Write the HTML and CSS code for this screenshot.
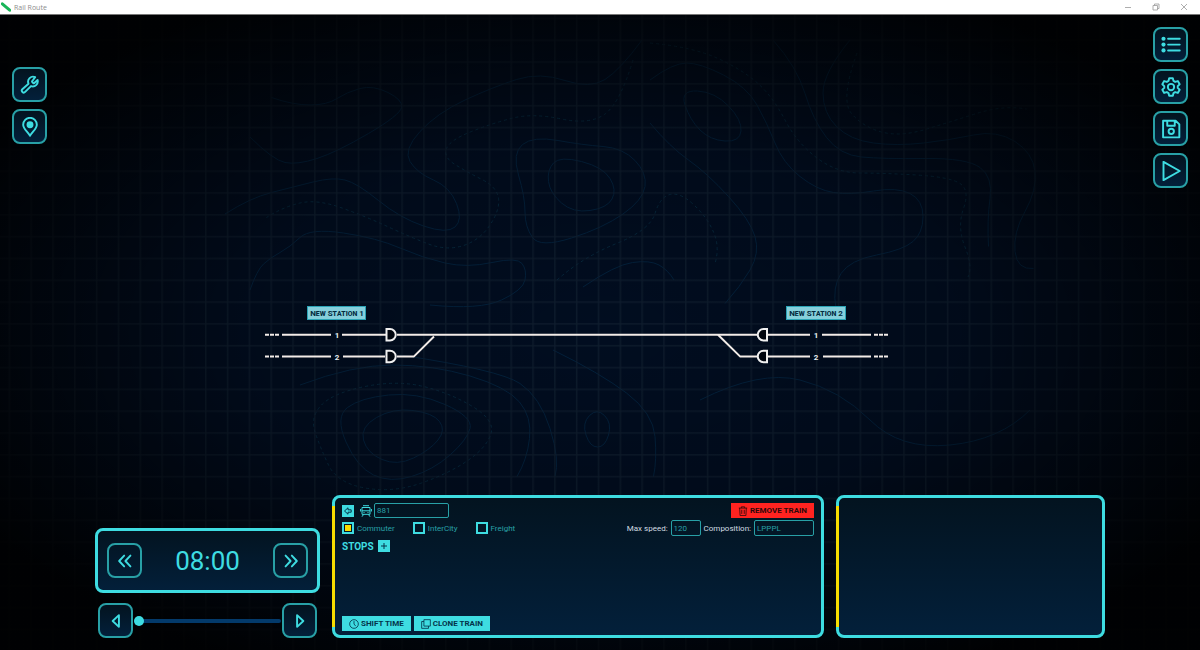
FILE: index.html
```html
<!DOCTYPE html>
<html lang="en">
	<head>
		<meta charset="UTF-8" />
		<meta name="viewport" content="width=device-width, initial-scale=1.0" />
		<title>Rail Route</title>
		<link rel="stylesheet" href="styles.css">
	</head>
	<body>
		<header class="titlebar">
			<svg class="titlebar-logo" viewBox="0 0 10 10" aria-hidden="true">
				<path d="M1.3 1.8 8.7 8.2" stroke="#19b558" stroke-width="3" stroke-linecap="round" />
			</svg>
			<span class="titlebar-name">Rail Route</span>
			<div class="window-controls">
				<button type="button" class="window-button" aria-label="Minimize">
					<svg viewBox="0 0 8 8"><path d="M1 4.5h6" /></svg>
				</button>
				<button type="button" class="window-button" aria-label="Restore">
					<svg viewBox="0 0 8 8"><path d="M1 2.5h4.5V7H1zM2.5 2.5V1H7v4.5H5.5" /></svg>
				</button>
				<button type="button" class="window-button" aria-label="Close">
					<svg viewBox="0 0 8 8"><path d="M1 1l6 6M7 1 1 7" /></svg>
				</button>
			</div>
		</header>

		<main class="game">
			<svg class="map" viewBox="0 15 1200 635" preserveAspectRatio="xMidYMid slice">
				<defs>
					<pattern id="grid" x="8.6" y="17.6" width="21.82" height="21.82" patternUnits="userSpaceOnUse">
						<path d="M0 .8h21.82M.8 0v21.82" class="grid-line" />
					</pattern>
					<radialGradient id="fade" cx=".5" cy=".5" r=".6">
						<stop offset="0" stop-color="#000" stop-opacity="0" />
						<stop offset=".5" stop-color="#000" stop-opacity=".2" />
						<stop offset="1" stop-color="#000" stop-opacity=".92" />
					</radialGradient>
				</defs>
				<rect y="15" width="1200" height="635" fill="#010d20" />
				<g id="contours"></g>
				<rect y="15" width="1200" height="635" fill="url(#grid)" />
				<rect y="15" width="1200" height="635" fill="url(#fade)" />

				<!-- tracks -->
				<g class="track">
					<path d="M282 334.7h49M342 334.7h44M397 334.7h360M768 334.7h42M822 334.7h49" />
					<path d="M282 356.4h49M343 356.4h42M397 356.4h17L434 336.5" />
					<path d="M718 334.7 740 356.4h17M768 356.4h42M823 356.4h48" />
				</g>
				<g class="track-end">
					<path d="M265 334.7h14M265 356.4h14M874 334.7h14M874 356.4h14" />
				</g>
				<g class="signal">
					<path d="M386.5 329v11.5h3.5a5.7 5.7 0 0 0 0-11.5z" />
					<path d="M386.5 350.7v11.5h3.5a5.7 5.7 0 0 0 0-11.5z" />
					<path d="M767 329v11.5h-3.5a5.7 5.7 0 0 1 0-11.5z" />
					<path d="M767 350.7v11.5h-3.5a5.7 5.7 0 0 1 0-11.5z" />
				</g>
				<g class="platform">
					<text x="337" y="338">1</text>
					<text x="337" y="360">2</text>
					<text x="816" y="338">1</text>
					<text x="816" y="360">2</text>
				</g>

				<!-- stations -->
				<g class="station">
					<rect x="307.5" y="306.5" width="58" height="13" />
					<text x="337" y="316">New Station 1</text>
					<rect x="786.5" y="306.5" width="59" height="13" />
					<text x="816" y="316">New Station 2</text>
				</g>
			</svg>

			<div class="hud">
				<div class="hud-top">
					<nav class="tools tools-left" aria-label="Editor">
						<button type="button" class="tile" aria-label="Build">
							<svg viewBox="0 0 24 24"><path d="M14.8 7.2a1 1 0 0 0 0 1.4l1 1a1 1 0 0 0 1.4 0l3.9-3.6a6 6 0 0 1-7.9 7.3l-7 7a2.2 2.2 0 0 1-3.4-3.2l7.4-6.7a6 6 0 0 1 8-7.8z" /></svg>
						</button>
						<button type="button" class="tile" aria-label="Station">
							<svg viewBox="0 0 24 24"><path d="M12 22.5C9 17.5 3.8 14 3.8 9.2a8.2 8.2 0 0 1 16.4 0C20.2 14 15 17.5 12 22.5z" /><circle cx="12" cy="9.3" r="3" fill="currentColor" /></svg>
						</button>
					</nav>
					<nav class="tools" aria-label="Game">
						<button type="button" class="tile" aria-label="Timetable">
							<svg viewBox="0 0 24 24"><path d="M8.5 4.5h14M8.500 11.500h14M8.500 18.500h14" /><g fill="currentColor" stroke="none"><circle cx="3" cy="4.500" r="2.500" /><circle cx="3" cy="11.500" r="2.500" /><circle cx="3" cy="18.500" r="2.500" /></g></svg>
						</button>
						<button type="button" class="tile" aria-label="Settings">
							<svg viewBox="0 0 24 24"><path d="M9.8 1.5h4.4l.8 3.2 2 1.2 3.2-1 2.2 3.8-2.3 2.2v2.2l2.3 2.2-2.2 3.8-3.2-1-2 1.2-.8 3.2H9.8L9 19.3l-2-1.2-3.2 1-2.2-3.8 2.3-2.2v-2.2L1.6 8.700l2.200-3.800 3.200 1 2-1.200z" /><circle cx="12" cy="12" r="3.800" /></svg>
						</button>
						<button type="button" class="tile" aria-label="Save">
							<svg viewBox="0 0 24 24"><path d="M2.500 2h15l4.500 4.500V22H2.500zM7.500 2v6h9V2" /><circle cx="12.300" cy="14.800" r="3.200" /></svg>
						</button>
						<button type="button" class="tile" aria-label="Play">
							<svg viewBox="0 0 24 24"><path d="M3 1 22.500 12 3 23z" /></svg>
						</button>
					</nav>
				</div>

				<div class="hud-bottom">
					<section class="time" aria-label="Time">
						<div class="panel clock">
							<button type="button" class="tile tile-flat" aria-label="Earlier">
								<svg viewBox="0 0 24 24"><path d="M11 5.500 5 12l6 6.500M18.500 5.500l-6 6.500 6 6.500" /></svg>
							</button>
							<time class="clock-value">08:00</time>
							<button type="button" class="tile tile-flat" aria-label="Later">
								<svg viewBox="0 0 24 24"><path d="m5.500 5.500 6 6.500-6 6.500M13 5.500l6 6.500-6 6.500" /></svg>
							</button>
						</div>
						<div class="scrub">
							<button type="button" class="tile" aria-label="Step back">
								<svg viewBox="0 0 24 24"><path d="M15.500 5v14L8 12z" /></svg>
							</button>
							<input type="range" class="scrub-range" min="0" max="100" value="0" aria-label="Time of day" />
							<button type="button" class="tile" aria-label="Step forward">
								<svg viewBox="0 0 24 24"><path d="M8.500 5v14l7.500-7z" /></svg>
							</button>
						</div>
					</section>

					<form class="panel panel-marked train">
						<div class="row row-head">
							<button type="button" class="square" aria-label="Back">
								<svg viewBox="0 0 12 12"><path d="M2.500 6 6 2.800v2h3.200v2.400H6v2z" /></svg>
							</button>
							<label class="train-number">
								<svg class="train-icon" viewBox="0 0 12 12" role="img" aria-label="Train number"><path d="M3 .7h6M2 2.500h8v6.800H2zM2 5.800h8M3.500 9.500 2 11.700M8.500 9.500l1.500 2.200M.6 4v2.500M11.400 4v2.500" /><path d="M3.500 7.500h1M7.500 7.500h1" /></svg>
								<input type="text" class="field field-number" value="881" />
							</label>
							<button type="button" class="action action-danger">
								<svg viewBox="0 0 12 12"><path d="M1 2.500h10M4 2.500V1h4v1.500M2 2.500l.5 9h7l.5-9M4.500 4.500v5M7.500 4.500v5" /></svg>
								REMOVE TRAIN
							</button>
						</div>
						<div class="row row-type">
							<label class="check"><input type="checkbox" checked />Commuter</label>
							<label class="check"><input type="checkbox" />InterCity</label>
							<label class="check"><input type="checkbox" />Freight</label>
							<div class="specs">
								<label for="max-speed">Max speed:</label>
								<input type="text" id="max-speed" class="field field-speed" value="120" />
								<label for="composition">Composition:</label>
								<input type="text" id="composition" class="field field-composition" value="LPPPL" />
							</div>
						</div>
						<div class="row row-stops">
							<h2 class="heading">STOPS</h2>
							<button type="button" class="square" aria-label="Add stop">
								<svg viewBox="0 0 12 12"><path d="M6 3v6M3 6h6" /></svg>
							</button>
						</div>
						<div class="row row-actions">
							<button type="button" class="action">
								<svg viewBox="0 0 12 12"><circle cx="6" cy="6" r="5.200" /><path d="M6 2.500V6l2 2.500" /></svg>
								SHIFT TIME
							</button>
							<button type="button" class="action">
								<svg viewBox="0 0 12 12"><path d="M3.500.8h7.700v7.700H3.500zM3.500 3H.8v8.200H9V8.500" /></svg>
								CLONE TRAIN
							</button>
						</div>
					</form>

					<section class="panel panel-marked details" aria-label="Details"></section>
				</div>
			</div>
		</main>

		<script src="contours.js"></script>
	</body>
</html>
```
FILE: styles.css
```css
:root {
	--cyan: #3edce1;
	--cyan-dim: #28a0a6;
	--yellow: #f7dc00;
	--red: #ff2320;
	--ink: #04344a;
	--panel-bg: linear-gradient(#03131f, #03203b);
}
* {
	box-sizing: border-box;
}
body {
	display: flex;
	flex-direction: column;
	min-height: 100vh;
	margin: 0;
	background-color: #000;
	color: var(--cyan);
	font-family: Roboto, sans-serif;
	font-size: 8px;
}
button,
input {
	margin: 0;
	font: inherit;
	color: inherit;
}
button {
	padding: 0;
	border: none;
	background: none;
	cursor: pointer;
}
svg {
	fill: none;
}

/* window title */
.titlebar {
	display: flex;
	align-items: center;
	height: 15px;
	padding: 0 12px 0 1px;
	border-bottom: 1px solid #777;
	background-color: #fff;
	color: #8c8c8c;
}
.titlebar-logo {
	width: 10px;
	height: 10px;
	margin-right: 3px;
}
.titlebar-name {
	font-family: "Open Sans", sans-serif;
	font-size: 7px;
}
.window-controls {
	display: flex;
	gap: 20px;
	margin-left: auto;
}
.window-button {
	display: flex;
}
.window-button svg {
	width: 8px;
	height: 8px;
	stroke: #999;
	stroke-width: 0.8;
}

/* map */
.game {
	display: grid;
	flex: 1;
	min-height: 0;
}
.map,
.hud {
	grid-area: 1 / 1;
	width: 100%;
	height: 100%;
}
.map {
	min-height: 0;
	contain: size;
}
.grid-line {
	stroke: #122131;
	stroke-width: 1.3;
	stroke-opacity: 0.8;
}
.contour {
	stroke: #03213c;
	stroke-width: 1;
}
.contour-dashed {
	stroke: #06283d;
	stroke-dasharray: 3 3;
}
.track {
	stroke: #f3ece8;
	stroke-width: 2;
	stroke-linejoin: round;
}
.track-end {
	stroke: #f3ece8;
	stroke-width: 2;
	stroke-dasharray: 4 1;
}
.signal {
	fill: #01060f;
	stroke: #f0f0f0;
	stroke-width: 2;
}
.platform {
	fill: #e8eef0;
	font-size: 8px;
	font-weight: 700;
	text-anchor: middle;
}
.station rect {
	fill: #86cfdb;
	stroke: #2aa3b5;
}
.station text {
	fill: #032b3f;
	font-size: 8px;
	font-weight: 700;
	font-variant: small-caps;
	text-anchor: middle;
}

/* overlay */
.hud {
	display: flex;
	flex-direction: column;
	justify-content: space-between;
	padding: 12px;
}
.hud-top {
	display: flex;
	justify-content: space-between;
	align-items: flex-start;
}
.tools {
	display: flex;
	flex-direction: column;
	gap: 7px;
}
.tools-left {
	margin-top: 40px;
}
.tile {
	display: flex;
	align-items: center;
	justify-content: center;
	flex: none;
	width: 35px;
	height: 35px;
	border: 2px solid var(--cyan-dim);
	border-radius: 8px;
	background: var(--panel-bg);
	color: var(--cyan);
}
.tile svg {
	width: 20px;
	height: 20px;
	stroke: currentColor;
	stroke-width: 2.3;
	stroke-linecap: round;
	stroke-linejoin: round;
}
.tile-flat {
	background: none;
}
.hud-bottom {
	display: flex;
	align-items: flex-end;
	gap: 12px;
	padding: 0 83px;
}
.panel {
	border: 3px solid var(--cyan);
	border-radius: 8px;
	background: var(--panel-bg);
	background-origin: border-box;
}
.panel-marked {
	position: relative;
	min-height: 143px;
}
.panel-marked::before {
	content: "";
	position: absolute;
	top: 8px;
	bottom: 8px;
	left: -3px;
	width: 3px;
	background-color: var(--yellow);
}

/* time */
.time {
	display: flex;
	flex-direction: column;
	gap: 10px;
	flex: 0 0 225px;
}
.clock {
	display: flex;
	align-items: center;
	justify-content: space-between;
	padding: 12px 9px;
}
.clock-value {
	font-size: 26px;
	line-height: 32px;
}
.scrub {
	display: flex;
	align-items: center;
	gap: 1px;
	padding: 0 3px;
}
.scrub-range {
	flex: 1;
	min-width: 0;
	height: 10px;
	appearance: none;
	background: none;
}
.scrub-range::-webkit-slider-runnable-track {
	height: 4px;
	border-radius: 2px;
	background-color: #033a6b;
}
.scrub-range::-webkit-slider-thumb {
	appearance: none;
	width: 10px;
	height: 10px;
	margin-top: -3px;
	border-radius: 50%;
	background-color: var(--cyan);
}

/* train form */
.train {
	display: flex;
	flex-direction: column;
	flex: 1;
	gap: 2px;
	padding: 5px 7px 4px;
}
.details {
	flex: 0 0 269px;
}
.row {
	display: flex;
	align-items: center;
}
.square {
	display: flex;
	align-items: center;
	justify-content: center;
	width: 12px;
	height: 12px;
	background-color: var(--cyan);
}
.square svg {
	width: 12px;
	height: 12px;
	stroke: var(--ink);
}
.train-number {
	display: flex;
	align-items: center;
	gap: 2px;
	margin-left: 6px;
}
.train-icon {
	flex: none;
	width: 12px;
	height: 12px;
	stroke: var(--cyan);
}
.field {
	height: 16px;
	padding: 0 2px;
	border: 1px solid var(--cyan-dim);
	border-radius: 2px;
	background-color: transparent;
	color: var(--cyan-dim);
}
.field-number {
	width: 75px;
	height: 15px;
}
.field-speed {
	width: 30px;
}
.field-composition {
	width: 60px;
}
.action {
	display: flex;
	align-items: center;
	gap: 2px;
	height: 15px;
	padding: 0 7px;
	background-color: var(--cyan);
	color: var(--ink);
	font-weight: 700;
}
.action svg {
	width: 10px;
	height: 10px;
	stroke: currentColor;
}
.action-danger {
	margin-left: auto;
	background-color: var(--red);
	color: #30080a;
}
.row-type {
	gap: 18px;
}
.check {
	display: flex;
	align-items: center;
	gap: 3px;
	color: var(--cyan-dim);
}
.check input {
	appearance: none;
	width: 12px;
	height: 12px;
	border: 2px solid var(--cyan);
}
.check input:checked {
	padding: 1px;
	background-color: var(--yellow);
	background-clip: content-box;
}
.specs {
	display: flex;
	align-items: center;
	gap: 3px;
	margin-left: auto;
	color: #d3dde2;
}
.row-stops {
	gap: 4px;
	height: 16px;
}
.heading {
	margin: 0;
	font-size: 10px;
	font-weight: 700;
}
.row-actions {
	gap: 3px;
	margin-top: auto;
}
```
FILE: contours.js
```js
// terrain lines, each one a list of x, y points
const solidLines = [
	[250, 137, 273, 160, 297, 165, 337, 152, 400, 115, 403, 100, 373, 85, 347, 92, 327, 105, 293, 105, 250, 90],
	[642, 40, 620, 70, 590, 89, 540, 72, 493, 87, 437, 113, 403, 150, 417, 173, 450, 187, 463, 220, 447, 234, 400, 218, 357, 183, 333, 177, 293, 187, 250, 198, 200, 230],
	[250, 290, 257, 270, 270, 258, 290, 247, 310, 228, 377, 238, 423, 258, 467, 268, 517, 257, 527, 270, 523, 290, 480, 310, 380, 300],
	[650, 123, 670, 147, 707, 173, 750, 220, 760, 253, 740, 287, 710, 320],
	[650, 80, 673, 63, 700, 63, 747, 87, 767, 123, 783, 163, 817, 190, 850, 195, 897, 187, 923, 200, 923, 233, 903, 250, 850, 260, 832, 287, 840, 330],
	[773, 40, 797, 67, 813, 120, 840, 155, 883, 159, 967, 158, 993, 177, 987, 220, 990, 273],
	[850, 40, 823, 73, 823, 113, 850, 140, 897, 146, 950, 140, 997, 130, 1033, 153, 1037, 190, 1013, 233, 1017, 270, 1050, 267],
	[583, 287, 615, 265, 650, 260, 668, 270, 680, 290],
	[300, 385, 353, 365, 433, 365, 507, 387, 532, 417, 527, 460, 507, 493],
	[400, 355, 500, 370, 540, 397, 560, 460, 550, 493],
	[553, 350, 600, 373, 653, 413, 657, 460, 650, 493],
	[700, 400, 760, 370, 840, 390, 900, 450, 1000, 440, 1060, 380]
]
const dashedLines = [
	[633, 60, 620, 103, 590, 125, 533, 113, 493, 123, 450, 140, 443, 157, 467, 172, 497, 187, 500, 210, 480, 240, 447, 251, 410, 237, 367, 217, 317, 199, 283, 207, 250, 228],
	[650, 43, 693, 47, 743, 70, 773, 97, 797, 143, 837, 173, 883, 173, 950, 177, 970, 190, 957, 227, 973, 267, 963, 287],
	[857, 53, 840, 100, 863, 127, 900, 137, 950, 122, 1003, 105, 1050, 113],
	[557, 280, 583, 257, 650, 230, 660, 197, 680, 192, 707, 217, 720, 247, 710, 280]
]
const solidRings = [
	[533, 136, 583, 145, 623, 148, 647, 173, 643, 200, 603, 228, 540, 248, 525, 227, 525, 197, 512, 153],
	[560, 156, 603, 167, 617, 190, 607, 208, 573, 213, 550, 193, 547, 170],
	[360, 427, 393, 408, 433, 413, 446, 430, 430, 450, 397, 466, 367, 453],
	[335, 417, 360, 398, 417, 392, 473, 417, 467, 440, 433, 470, 390, 483, 357, 467],
	[597, 408, 612, 423, 605, 447, 590, 447, 582, 423],
	[680, 90, 715, 92, 742, 120, 740, 142, 710, 140, 690, 120]
]
const dashedRings = [
	[310, 417, 333, 393, 397, 380, 450, 393, 495, 420, 487, 447, 450, 473, 393, 493, 337, 483, 320, 447]
]

const contours = document.getElementById('contours')

// quadratic curves through the middle of each pair of points
const smoothPath = (line, closed) => {
	const points = []
	for (let i = 0; i < line.length; i += 2) {
		points.push([line[i], line[i + 1]])
	}
	const middle = (a, b) => [(a[0] + b[0]) / 2, (a[1] + b[1]) / 2]
	if (closed) {
		points.push(points[0], points[1])
	}
	let path = `M${closed ? middle(points[0], points[1]) : points[0]}`
	for (let i = 1; i < points.length - 1; i++) {
		path += ` Q${points[i]} ${middle(points[i], points[i + 1])}`
	}
	return path
}

const drawLines = (lines, className, closed) => {
	lines.forEach(line => {
		const path = document.createElementNS('http://www.w3.org/2000/svg', 'path')
		path.setAttribute('class', className)
		path.setAttribute('d', smoothPath(line, closed))
		contours.appendChild(path)
	})
}

drawLines(solidLines, 'contour', false)
drawLines(dashedLines, 'contour contour-dashed', false)
drawLines(solidRings, 'contour', true)
drawLines(dashedRings, 'contour contour-dashed', true)
```
